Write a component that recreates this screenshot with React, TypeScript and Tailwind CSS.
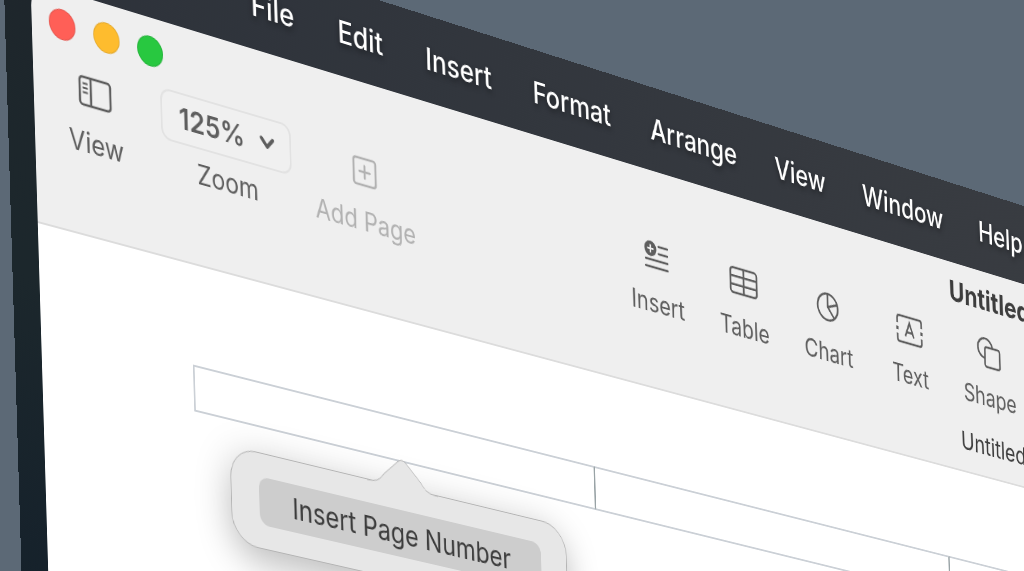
import type { ReactNode } from "react";

const menus = ["File", "Edit", "Insert", "Format", "Arrange", "View", "Window", "Help"];

const lights = [
  { name: "Close", color: "bg-[#ff5f57]" },
  { name: "Minimize", color: "bg-[#febc2e]" },
  { name: "Full screen", color: "bg-[#28c840]" },
];

function SidebarIcon() {
  return (
    <svg width="40" height="32" viewBox="0 0 40 32" fill="none" stroke="currentColor" strokeWidth="2.5">
      <rect x="2" y="2" width="36" height="28" rx="3.5" />
      <path d="M15 2v28" />
      <path d="M5.5 8.5h6M5.5 13h6M5.5 17.5h6" strokeWidth="1.8" />
    </svg>
  );
}

function AddPageIcon() {
  return (
    <svg width="32" height="32" viewBox="0 0 32 32" fill="none" stroke="currentColor" strokeWidth="2.6">
      <rect x="2" y="2" width="28" height="28" rx="3" />
      <path d="M16 9.5v13M9.5 16h13" strokeLinecap="round" />
    </svg>
  );
}

function InsertIcon() {
  return (
    <svg width="36" height="34" viewBox="0 0 36 34" fill="none" stroke="currentColor" strokeWidth="2.3">
      <path d="M20.5 5h12.500M20.5 13h12.500M2 21h31M2 29h31" strokeLinecap="round" />
      <circle cx="9" cy="9" r="8.5" fill="currentColor" stroke="none" />
      <path d="M9 4.500v9M4.500 9h9" stroke="#efefef" strokeWidth="2.2" />
    </svg>
  );
}

function TableIcon() {
  return (
    <svg width="42" height="32" viewBox="0 0 42 32" fill="none" stroke="currentColor" strokeWidth="2.6">
      <rect x="2" y="2" width="38" height="28" rx="4" />
      <path d="M21 2v28M2 11.3h38M2 20.7h38" />
    </svg>
  );
}

function ChartIcon() {
  return (
    <svg width="36" height="34" viewBox="0 0 36 34" fill="none" stroke="currentColor" strokeWidth="2.6">
      <circle cx="18" cy="17" r="15" />
      <path d="M18 2v15l9.5 11.5M18 17l14-5" strokeLinejoin="round" />
    </svg>
  );
}

function TextIcon() {
  return (
    <svg width="42" height="34" viewBox="0 0 42 34" fill="none" stroke="currentColor" strokeWidth="2.5">
      <path d="M2.5 11V5q0-3 3-3h31q3 0 3 3V11M2.5 23v6q0 3 3 3h31q3 0 3-3V23" />
      <path d="M2.5 15v4M39.5 15v4" strokeWidth="3.6" />
      <path d="M14.5 24.5l6.5-16 6.5 16M17 19.5h8" strokeWidth="2.4" />
    </svg>
  );
}

function ShapeIcon() {
  return (
    <svg width="38" height="36" viewBox="0 0 38 36" fill="none" stroke="currentColor" strokeWidth="2.5">
      <path d="M12 24A11.5 11.5 0 1 1 24.5 11" />
      <rect x="12.5" y="11" width="23.5" height="23" rx="3" />
    </svg>
  );
}

const tools = [
  { label: "Insert", icon: <InsertIcon /> },
  { label: "Table", icon: <TableIcon /> },
  { label: "Chart", icon: <ChartIcon /> },
  { label: "Text", icon: <TextIcon /> },
  { label: "Shape", icon: <ShapeIcon /> },
];

type ToolProps = { label: string; icon: ReactNode; className?: string; disabled?: boolean };

function Tool({ label, icon, className = "", disabled = false }: ToolProps) {
  return (
    <button
      disabled={disabled}
      className={`flex flex-col items-center gap-3 text-[#5e5e5e] disabled:text-[#b2b2b2] ${className}`}
    >
      <span className="flex h-[53px] items-center">{icon}</span>
      <span className="text-[28px] leading-[28px] whitespace-nowrap">{label}</span>
    </button>
  );
}

function ZoomSelect() {
  return (
    <div className="flex w-[160px] flex-col items-center gap-3 text-[#5e5e5e]">
      <div className="relative w-full">
        <select
          id="zoom"
          defaultValue="125%"
          className="h-[53px] w-full appearance-none rounded-xl border-2 border-[#e2e2e2] bg-[#f0f0f0] pl-5 text-[30px] font-semibold"
        >
          <option>100%</option>
          <option>125%</option>
          <option>150%</option>
        </select>
        <svg
          className="pointer-events-none absolute top-[18px] right-5"
          width="20"
          height="16"
          viewBox="0 0 20 16"
          fill="none"
          stroke="currentColor"
          strokeWidth="4"
          strokeLinecap="round"
          strokeLinejoin="round"
        >
          <path d="M3 4l7 8 7-8" />
        </svg>
      </div>
      <label htmlFor="zoom" className="text-[28px] leading-[28px]">
        Zoom
      </label>
    </div>
  );
}

function MenuBar() {
  return (
    <nav className="flex h-[93px] items-center gap-[55px] bg-linear-to-r from-[#2d323a] to-[#3a3d42] to-60% pl-[296px] text-[32px] font-medium text-white">
      {menus.map((menu) => (
        <button key={menu} className="text-shadow-[0_3px_6px_rgb(0_0_0_/_0.4)]">
          {menu}
        </button>
      ))}
    </nav>
  );
}

function Toolbar() {
  return (
    <header className="border-b-2 border-[#dcdcdc] bg-[#efefef]">
      <div className="relative flex h-[68px] items-center gap-[21px] pl-5">
        {lights.map((light) => (
          <button
            key={light.name}
            aria-label={light.name}
            className={`size-[31px] rounded-full border border-black/10 ${light.color}`}
          />
        ))}
        <h1 className="pointer-events-none absolute inset-x-0 text-center text-[33px] font-bold text-[#3d3d3d]">
          Untitled
        </h1>
      </div>

      <div className="flex h-[102px] items-start pl-[22px]">
        <div className="flex gap-7">
          <Tool label="View" icon={<SidebarIcon />} className="w-[100px]" />
          <ZoomSelect />
          <Tool label="Add Page" icon={<AddPageIcon />} className="w-[130px]" disabled />
        </div>
        <div className="ml-[266px] flex">
          {tools.map((tool) => (
            <Tool key={tool.label} {...tool} className="w-[124px]" />
          ))}
        </div>
      </div>

      <div className="flex h-[70px] items-center justify-center text-[28px] text-[#3d3d3d]">Untitled</div>
    </header>
  );
}

function PageNumberPopover() {
  return (
    <div className="absolute top-[74px] left-[42px] w-[435px] rounded-[32px] border border-[#b4b4b4] bg-[#e7e7e7] px-[34px] py-6 shadow-[0_12px_44px_rgb(0_0_0_/_0.28)]">
      <svg className="absolute -top-[30px] left-1/2 -translate-x-1/2" width="92" height="32" viewBox="0 0 92 32">
        <path
          d="M0 30C12 30 16 28 22 20L41 3Q46 -1 51 3L70 20C76 28 80 30 92 30V32H0Z"
          fill="#e7e7e7"
        />
        <path
          d="M0 30C12 30 16 28 22 20L41 3Q46 -1 51 3L70 20C76 28 80 30 92 30"
          fill="none"
          stroke="#b4b4b4"
        />
      </svg>
      <button className="h-[50px] w-full rounded-xl bg-[#cdcdcd] text-[30px] text-[#3c3c3c]">
        Insert Page Number
      </button>
    </div>
  );
}

function Document() {
  return (
    <main className="flex-1 bg-white pt-[103px] pl-[180px]">
      <div className="relative">
        <div className="grid h-[48px] grid-cols-[repeat(3,520px)]">
          <div className="border-2 border-r-[#99a3a6] border-[#cbd0d6]" />
          <div className="border-y-2 border-r-2 border-r-[#99a3a6] border-[#cbd0d6]" />
          <div className="border-y-2 border-r-2 border-[#cbd0d6]" />
        </div>
        <PageNumberPopover />
      </div>
    </main>
  );
}

export default function App() {
  return (
    <div className="h-screen overflow-hidden bg-[#5c6976] font-['Inter',sans-serif]">
      {/* the display, seen at an angle */}
      <div className="flex min-h-[135vh] w-[256vw] origin-top-left flex-col bg-linear-to-b from-[#1f262c] via-[#1c272c] to-[#14202b] [transform:matrix3d(0.87357,0.26287,0,0.00013236,0.030123,1.0041,0,0,0,0,1,0,0.743,-120.59,0,1)]">
        <MenuBar />
        <div className="flex flex-1 flex-col pl-[31px]">
          <div className="flex flex-1 flex-col overflow-hidden rounded-t-[24px]">
            <Toolbar />
            <Document />
          </div>
        </div>
      </div>
    </div>
  );
}
